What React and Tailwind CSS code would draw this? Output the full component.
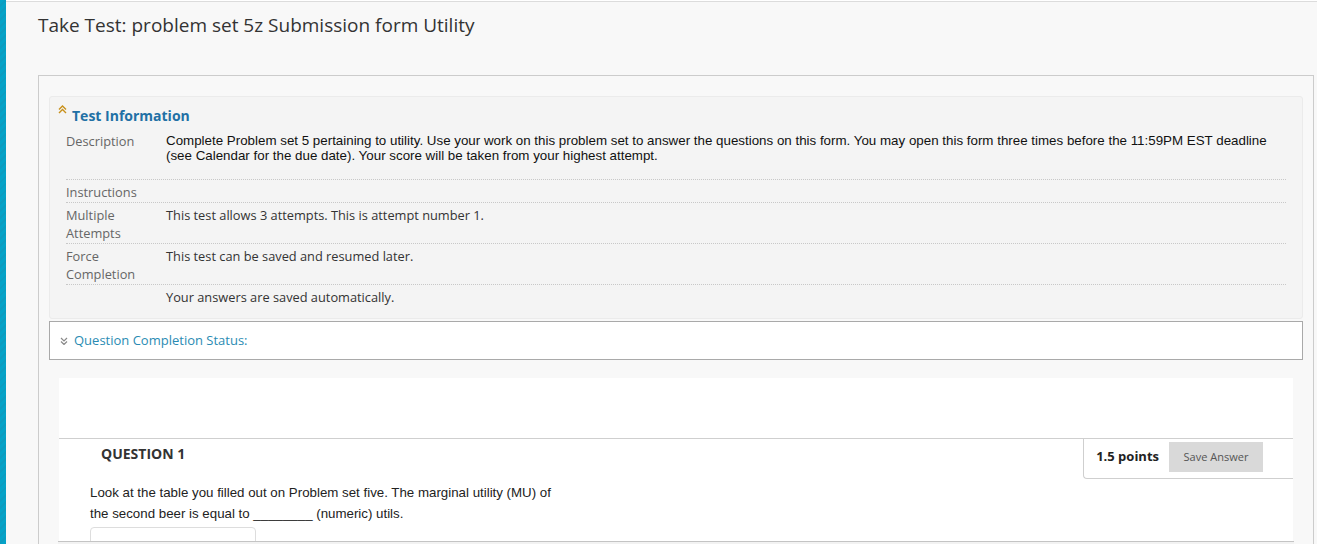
import React from "react";

const OS = { fontFamily: '"Open Sans", "Noto Sans", sans-serif' };
const AR = { fontFamily: '"Liberation Sans", Arial, sans-serif' };

function ChevUp() {
  return (
    <svg width="9" height="9" viewBox="0 0 9 9" className="shrink-0">
      <path d="M1 4.5 L4.5 1 L8 4.5" fill="none" stroke="#c8901a" strokeWidth="1.4" />
      <path d="M1 8 L4.5 4.5 L8 8" fill="none" stroke="#c8901a" strokeWidth="1.4" />
    </svg>
  );
}

function ChevDown() {
  return (
    <svg width="8" height="8" viewBox="0 0 8 8" className="shrink-0">
      <path d="M1 1 L4 4 L7 1" fill="none" stroke="#8a8a8a" strokeWidth="1.2" />
      <path d="M1 4.5 L4 7.5 L7 4.5" fill="none" stroke="#8a8a8a" strokeWidth="1.2" />
    </svg>
  );
}

function Row({ label, children, last }) {
  return (
    <div
      className={
        "flex pt-[3px] pb-[1px] " +
        (last ? "" : "border-b border-dotted border-[#c8c8c8]")
      }
    >
      <div className="w-[100px] shrink-0 text-[12.8px] leading-[18px] text-[#666]">{label}</div>
      <div className="flex-1 text-[12.8px] leading-[18px] text-[#333]">{children}</div>
    </div>
  );
}

export default function App() {
  return (
    <div className="relative flex h-[544px] w-full overflow-hidden bg-[#f8f8f8]" style={OS}>
      <div className="w-[6px] shrink-0 bg-[#05a3c8] bg-[repeating-linear-gradient(135deg,#05a3c8_0px,#05a3c8_3px,#0c9cc0_3px,#0c9cc0_5px)]" />
      <div className="flex-1 pt-px bg-white">
        <div className="h-full border-t border-[#dcdcdc] bg-[#f8f8f8]">
          <h1 className="pl-[32px] pt-[9px] text-[19px] leading-[28px] font-normal text-[#333]">
            Take Test: problem set 5z Submission form Utility
          </h1>

          <div className="mt-[36px] ml-[32px] mr-[3px] border border-[#cccccc] px-[10px] pt-[20px]">
            {/* Test information */}
            <div className="rounded-[3px] border border-[#ebebeb] bg-[#f4f4f4] pl-[16px] pr-[16px] pt-[8px] pb-[11px]">
              <div className="relative flex items-center h-[20px] mb-[4px]">
                <div className="absolute left-[-8px] top-[0px]">
                  <ChevUp />
                </div>
                <span className="pl-[6px] text-[14px] font-bold text-[#2170a5]">Test Information</span>
              </div>
              <div className="flex pt-[3px] border-b border-dotted border-[#c8c8c8]">
                <div className="w-[100px] shrink-0 text-[12.8px] leading-[18px] text-[#666]">Description</div>
                <div className="flex-1 pt-[1px] pb-[16px] text-[13.35px] leading-[15px] text-[#111]" style={AR}>
                  Complete Problem set 5 pertaining to utility. Use your work on this problem set to answer the questions on this form. You may open this form three times before the 11:59PM EST deadline (see Calendar for the due date). Your score will be taken from your highest attempt.
                </div>
              </div>
              <Row label="Instructions"></Row>
              <Row label={<>Multiple<br />Attempts</>}>This test allows 3 attempts. This is attempt number 1.</Row>
              <Row label={<>Force<br />Completion</>}>This test can be saved and resumed later.</Row>
              <Row label="" last>Your answers are saved automatically.</Row>
            </div>

            {/* Question completion status */}
            <div className="mt-[2px] flex h-[39px] items-center gap-[6px] border border-[#a9a9a9] bg-white pl-[10px]">
              <ChevDown />
              <span className="text-[13px] text-[#2a8bb3]">Question Completion Status:</span>
            </div>

            {/* Question panel */}
            <div className="mx-[10px] mt-[18px] bg-white">
              <div className="h-[60px]" />
              <div className="flex items-start justify-between border-t border-[#cfcfcf]">
                <div className="pl-[42px] pt-[5px] text-[14px] font-bold leading-[20px] text-[#333]">QUESTION 1</div>
                <div className="flex items-center gap-[10px] rounded-bl-[4px] border-b border-l border-[#cfcfcf] pl-[12px] pr-[30px] pt-[3px] pb-[6px]">
                  <span className="text-[13px] font-bold text-[#222]">1.5 points</span>
                  <button className="h-[30px] w-[94px] bg-[#d9d9d9] text-[11px] text-[#555]">Save Answer</button>
                </div>
              </div>
              <div className="pl-[31px] pt-[3px] text-[13.3px] leading-[21px] text-[#222]" style={AR}>
                <p>Look at the table you filled out on Problem set five. The marginal utility (MU) of</p>
                <p>the second beer is equal to ________ (numeric) utils.</p>
                <div className="mt-[3px] h-[30px] w-[166px] rounded-[4px] border border-[#dddddd]" />
              </div>
            </div>
          </div>
        </div>
      </div>
      <div className="absolute left-[58px] top-[541px] h-[10px] w-[1236px] border-t border-[#c4c4c4] bg-[#f2f2f2]" />
    </div>
  );
}
